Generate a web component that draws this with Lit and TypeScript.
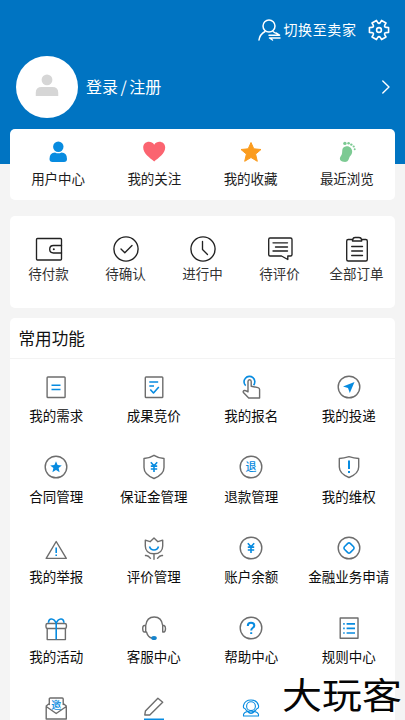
import { LitElement, html, css, svg, TemplateResult } from "lit";
import { customElement, property } from "lit/decorators.js";

const point = (radius: number, degrees: number) => {
  const a = (degrees * Math.PI) / 180;
  return `${(14 + radius * Math.cos(a)).toFixed(2)} ${(14 + radius * Math.sin(a)).toFixed(2)}`;
};

const gearPath =
  "M" +
  [0, 60, 120, 180, 240, 300]
    .map((a) => [point(7.3, a - 21), point(9.9, a - 15), point(9.9, a + 15), point(7.3, a + 21), point(6.5, a + 30)].join("L"))
    .join("L") +
  "Z";

const icons: Record<string, TemplateResult> = {
  switch: svg`<g class="w" stroke-width="1.5"><circle cx="14" cy="10" r="6"/><path d="M4 24C4.6 20 6.600 17.400 10 15.500M18 15.500L20.200 17M14 19.200H24.500L21 17M25 22H14.500L17.500 24"/></g>`,
  gear: svg`<g class="w" stroke-width="1.6"><path d=${gearPath}/><circle cx="14" cy="14" r="2.400"/></g>`,
  avatar: svg`<g fill="#d6d6d6"><circle cx="14" cy="7.600" r="6"/><path d="M1.500 25.400V22Q1.500 15.400 8 15.400H20Q26.500 15.400 26.500 22V25.400Z"/></g>`,
  chevron: svg`<path class="w" stroke-width="1.400" d="M10.800 8L17 14L10.800 20"/>`,
  user: svg`<g fill="#078be0"><circle cx="14.300" cy="8.800" r="5.200"/><path d="M5.500 21Q5.500 14.500 11 14.500Q14.300 16.200 17.500 14.500Q23 14.500 23 21Q23 24 20 24H8.500Q5.500 24 5.500 21Z"/></g>`,
  heart: svg`<path fill="#fb6470" d="M14.200 23.400C10 20 3.200 15.500 3.200 9.500C3.200 3.500 11 1.700 14.200 6.700C17.400 1.700 25.200 3.500 25.200 9.500C25.200 15.500 18.400 20 14.200 23.400Z"/>`,
  star: svg`<path fill="#fb9c1e" stroke="#fb9c1e" stroke-width="1" stroke-linejoin="round" d="M14 4.500L16.800 10.800L24 11.500L18.600 16.100L20.300 23.300L14 19.500L7.700 23.300L9.400 16.100L4 11.500L11.200 10.800Z"/>`,
  foot: svg`<g fill="#7cca93"><path d="M12.500 8.500C16 7.500 19.300 10 19.200 14C19 17 16.500 18 16 20.500C15.300 23.500 13 24.300 10.500 23.800C7 23.300 6 20.500 7.700 18.200C9.500 16 9 14.500 9.300 12C9.500 10 10.500 9 12.500 8.500Z"/><circle cx="11.900" cy="5.400" r="1.700"/><circle cx="15.600" cy="5.200" r="1.300"/><circle cx="18.300" cy="6.600" r="1.200"/><circle cx="20.700" cy="8.500" r="1.100"/><circle cx="21.700" cy="11.200" r="1"/></g>`,
  wallet: svg`<g class="k"><rect x="1.500" y="3.500" width="25" height="21.500" rx="1"/><path d="M26.500 10.500H18.500Q14.700 10.500 14.700 14.300Q14.700 18 18.500 18H26.500"/></g><circle cx="18.800" cy="14.300" r="1" fill="#222"/>`,
  check: svg`<g class="k"><circle cx="14" cy="14" r="12.100"/><path d="M9 14L12.800 17.800L20 10.500"/></g>`,
  clock: svg`<g class="k"><circle cx="14" cy="14" r="12.100"/><path d="M13.500 6.500V14.500L18.500 19.500"/></g>`,
  comment: svg`<g class="k"><path d="M4 3H24.500Q26 3 26 4.500V19.500Q26 21 24.500 21H21.800V24.500L15.500 21H4Q2.700 21 2.700 19.500V4.500Q2.700 3 4 3ZM7 7.800H21.500M9.500 12H21.500M7 16H21.500"/></g>`,
  clipboard: svg`<g class="k"><path d="M10 4.500H5.200Q3.700 4.500 3.700 6V24.500Q3.700 26 5.200 26H22.800Q24.300 26 24.300 24.500V6Q24.300 4.500 22.800 4.500H18.300M9.500 6H18.700V4.500Q18 2.500 16 2.500H12Q10.300 2.500 9.500 4.500ZM8.700 11.500H19.500M8.700 16H19.500M8.700 20.500H19.500"/></g>`,
  need: svg`<rect class="g" x="5.100" y="4" width="18" height="20.500" rx=".8"/><path class="b" d="M9.500 12.200H18.500M9.500 16.500H18.500"/>`,
  bid: svg`<rect class="g" x="5.300" y="4" width="17.500" height="20.500" rx=".8"/><path class="b" d="M9.300 9H18.200M9.300 13H14M10.300 16.500L13.500 20L18.800 14"/>`,
  tap: svg`<path class="b" d="M8.700 12.700A5.400 5.400 0 1 1 16.600 12.200" stroke-width="1.700"/><path class="g" d="M11 18.800V8.500Q11 6.700 12.600 6.700Q14.200 6.700 14.200 8.500V13.200L21 14.600Q22.600 15 22.600 16.600V25H11.700L6.400 19.500Q5.700 18 7.300 17.500Q8.200 17.300 11 18.800"/>`,
  send: svg`<circle class="g" cx="14" cy="14" r="10.800"/><path fill="#078be0" d="M19.500 9L8 13.500L13 15L14.800 20Z"/>`,
  contract: svg`<circle class="g" cx="14" cy="14" r="10.800"/><path fill="#078be0" d="M14 8.200L15.600 12.100L19.800 12.400L16.600 15.100L17.600 19.200L14 17L10.400 19.200L11.400 15.100L8.200 12.400L12.400 12.100Z"/>`,
  deposit: svg`<path class="g" d="M14 2.300Q18.500 5.200 24 5.500V14.500C24 20 19 23.500 14 25.500C9 23.500 4 20 4 14.500V5.500Q9.500 5.200 14 2.300Z"/><path class="b" d="M10.800 9.200L14 12.800L17.200 9.200M10.800 13.100H17.200M10.800 16H17.200M14 12.800V19"/>`,
  refund: svg`<circle class="g" cx="14" cy="14" r="10.800"/><text x="14" y="18" font-size="11" text-anchor="middle" class="t">退</text>`,
  rights: svg`<path class="g" d="M14 3.600Q19 5.300 23.700 5.500V14C23.700 19.500 19 22.500 14 24.500C9 22.500 4.300 19.500 4.300 14V5.500Q9 5.300 14 3.600Z"/><path class="b heavy" d="M14 7.500V16M14 18V20"/>`,
  report: svg`<path class="g" d="M14.200 7.500L24.300 24.400H4.200Z"/><path class="b" d="M14.200 13.500V19M14.200 20.500V22"/>`,
  rose: svg`<path class="g" d="M14 19.800V25.200M14 19.800C8 19.800 5.300 16 5.300 12V6.200L10.100 7.700L14 4L17.900 7.700L22.700 6.200V12C22.700 16 20 19.800 14 19.800M5.500 21.500Q8 21 10.500 24.300M22.500 21.500Q20 21 17.500 24.300"/><path class="b" d="M9.500 12.500Q10.500 16 14 16Q17.500 16 18.500 12.500"/>`,
  balance: svg`<circle class="g" cx="14" cy="14" r="10.800"/><path class="b" d="M10.800 9.200L14 12.800L17.200 9.200M10.800 13.100H17.200M10.800 16H17.200M14 12.800V19"/>`,
  finance: svg`<circle class="g" cx="14" cy="14" r="10.800"/><path class="b" d="M12.800 9.400Q14 8.400 15.200 9.400L18.600 12.800Q19.600 14 18.600 15.200L15.200 18.600Q14 19.600 12.800 18.600L9.400 15.200Q8.400 14 9.400 12.800Z"/>`,
  gift: svg`<path class="g" d="M5.700 9.500H22.700Q24.400 9.500 24.400 11V13Q24.400 14.500 22.700 14.500H5.700Q4 14.500 4 13V11Q4 9.500 5.700 9.500ZM5.200 14.500V25.600H23.400V14.500"/><path class="b" d="M14.200 25.600V9.300C12 4 6.500 3.500 6.500 8.700M14.200 9.300C16.400 4 21.900 3.500 21.900 8.700"/>`,
  headset: svg`<path class="g" d="M5.700 11.500C6.500 5 10 3 14.200 3C18.400 3 21.900 5 22.700 11.500V17.500M5.700 11.500V18M5.700 11.500H4.500Q2.700 11.500 2.700 14.500Q2.700 18 4.500 18H5.700ZM22.700 11.500H24Q25.500 12 25.500 14.500Q25.500 17.500 24 18H22.700M6.500 18Q8 23.500 12 24"/><ellipse cx="14" cy="24.100" rx="2.800" ry="2" fill="#1684cc"/>`,
  help: svg`<circle class="g" cx="14" cy="14" r="10.800"/><path class="b heavy" d="M10.800 12Q10.800 8.800 14 8.800Q17.300 8.800 17.300 11.500Q17.300 13 15.600 14Q14.200 15 14.200 16.500M14.200 18.200V20"/>`,
  rules: svg`<rect class="g" x="5.200" y="4" width="17.800" height="20.200"/><path class="b" d="M8.200 9.900H9.700M8.200 14.400H9.700M8.200 19H9.700M11.600 9.900H20M11.600 14.400H20M11.600 19H20"/>`,
  invite: svg`<path class="g" d="M7.300 10.500V5Q7.300 4 8.300 4H20.200Q21.200 4 21.200 5V10.500M7.300 9.500L4.200 12V25H24.300V12L21.200 9.500M4.200 12.500L14.200 19.500L24.300 12.500"/><text x="14.200" y="14.800" font-size="10" text-anchor="middle" class="t">邀</text>`,
  edit: svg`<path class="g" d="M5.400 17L17.900 4.200L22.700 8.300L9.800 21H4.800Z"/><path class="b" d="M4 25.300H24"/>`,
  agent: svg`<g class="b"><circle cx="14" cy="12.200" r="4.400"/><path d="M8 14.500Q6 14.500 6.500 11.500Q8 6 14 6Q20 6 21.500 11.500Q22 14.500 20 14.500M8 14.500Q10 18 14 18Q18 18 20 14.500M6.500 22V20.500Q7 18.200 10.500 17.500Q14 21.500 17.500 17.500Q21 18.200 21.500 20.500V22Z"/></g>`,
};

@customElement("app-icon")
export class AppIcon extends LitElement {
  @property() name = "";
  static styles = css`
    :host { display: block; width: 28px; height: 28px; flex: none; }
    svg { display: block; width: 100%; height: 100%; overflow: visible; }
    .w, .k, .g, .b { fill: none; stroke-linecap: round; stroke-linejoin: round; }
    .w { stroke: #fff; }
    .k { stroke: #222; stroke-width: 1.35; }
    .g { stroke: #6d6d6d; stroke-width: 1.4; }
    .b { stroke: #078be0; stroke-width: 1.6; stroke-linecap: butt; }
    .heavy { stroke-width: 2; }
    g.b { stroke-width: 1.1; }
    .t { fill: #078be0; font-family: "Noto Sans CJK SC", sans-serif; font-weight: 500; }
  `;
  render() {
    return html`<svg viewBox="0 0 28 28">${icons[this.name]}</svg>`;
  }
}

type Entry = [icon: string, label: string];

const shortcuts: Entry[] = [["user", "用户中心"], ["heart", "我的关注"], ["star", "我的收藏"], ["foot", "最近浏览"]];
const orders: Entry[] = [["wallet", "待付款"], ["check", "待确认"], ["clock", "进行中"], ["comment", "待评价"], ["clipboard", "全部订单"]];
const features: Entry[] = [
  ["need", "我的需求"], ["bid", "成果竞价"], ["tap", "我的报名"], ["send", "我的投递"],
  ["contract", "合同管理"], ["deposit", "保证金管理"], ["refund", "退款管理"], ["rights", "我的维权"],
  ["report", "我的举报"], ["rose", "评价管理"], ["balance", "账户余额"], ["finance", "金融业务申请"],
  ["gift", "我的活动"], ["headset", "客服中心"], ["help", "帮助中心"], ["rules", "规则中心"],
  ["invite", ""], ["edit", ""], ["agent", ""],
];

@customElement("app-root")
export class AppRoot extends LitElement {
  static styles = css`
    :host {
      display: block; position: relative; height: 720px; overflow: hidden;
      background: linear-gradient(#0074c2 164px, #f4f4f4 164px);
      font-family: "Noto Sans CJK SC", sans-serif; font-size: 13.5px; line-height: 20px; color: #1c1c1c;
    }
    .tools { display: flex; align-items: center; height: 28px; padding: 16px 12px 0 0; justify-content: flex-end; color: #fff; }
    .tools span { font-size: 14px; letter-spacing: 0.6px; margin: 0 8.5px 2px 1px; }
    .profile { display: flex; align-items: center; height: 62px; margin: 12px 5px 0 15.5px; color: #fff; }
    .avatar { display: flex; align-items: center; justify-content: center; width: 62px; height: 62px; border-radius: 50%; background: #fff; }
    .avatar app-icon { transform: translateY(-1.3px) scale(0.9); }
    .login { flex: 1; margin: 0 0 2px 8.5px; font-size: 16px; }
    .slash { margin: 0 2.5px; }
    .card { display: grid; margin: 0 10px; background: #fff; border-radius: 5px; box-sizing: border-box; }
    .item { display: flex; flex-direction: column; align-items: center; white-space: nowrap; }
    .quick { grid-template-columns: repeat(4, 1fr); height: 71.5px; margin-top: 10.5px; padding-top: 9.5px; }
    .quick .item { gap: 1.5px; }
    .orders { grid-template-columns: repeat(5, 1fr); height: 91.5px; margin-top: 16px; padding-top: 18.5px; color: #333; }
    .panel { margin: 10.5px 10px 0; background: #fff; border-radius: 5px; height: 420px; }
    .title { margin: 0; padding-left: 8.5px; height: 40px; line-height: 41px; font-size: 16.6px; font-weight: 400; color: #111; border-bottom: 1px solid #f3f3f3; }
    .features { display: grid; grid-template-columns: repeat(4, 97.5px); grid-auto-rows: 80.4px; margin-left: -2.5px; padding-top: 13.8px; color: #0c0c0c; }
    .features .item { gap: 4.4px; }
    .mark {
      position: absolute; left: 281.5px; top: 669px; font-size: 36px; line-height: 48px; font-weight: 400; color: #050505;
      white-space: nowrap; text-shadow: 0 0 2px #fff, 0 0 2px #fff;
      transform: scaleX(1.11); transform-origin: left;
    }
  `;

  private items(list: Entry[]) {
    return list.map(([icon, label]) => html`<div class="item"><app-icon name=${icon}></app-icon><span>${label}</span></div>`);
  }

  render() {
    return html`
      <div class="tools"><app-icon name="switch"></app-icon><span>切换至卖家</span><app-icon name="gear"></app-icon></div>
      <div class="profile">
        <div class="avatar"><app-icon name="avatar"></app-icon></div>
        <div class="login">登录<span class="slash">/</span>注册</div>
        <app-icon name="chevron"></app-icon>
      </div>
      <div class="card quick">${this.items(shortcuts)}</div>
      <div class="card orders">${this.items(orders)}</div>
      <section class="panel">
        <h2 class="title">常用功能</h2>
        <div class="features">${this.items(features)}</div>
      </section>
      <div class="mark">大玩客</div>
    `;
  }
}
